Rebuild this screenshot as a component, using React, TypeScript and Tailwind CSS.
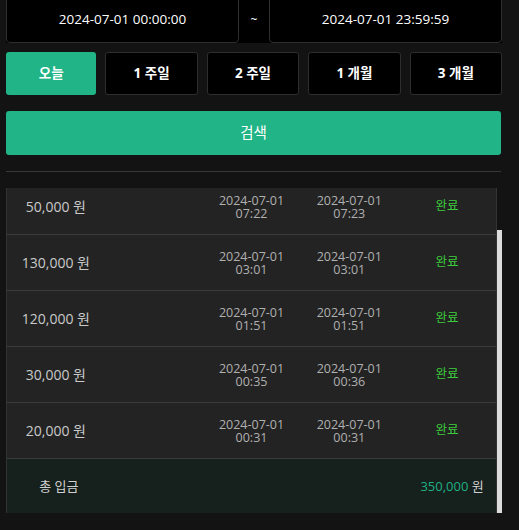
import React from "react";

const rows = [
  { amount: "50,000 원", d1: ["2024-07-01", "07:22"], d2: ["2024-07-01", "07:23"] },
  { amount: "130,000 원", d1: ["2024-07-01", "03:01"], d2: ["2024-07-01", "03:01"] },
  { amount: "120,000 원", d1: ["2024-07-01", "01:51"], d2: ["2024-07-01", "01:51"] },
  { amount: "30,000 원", d1: ["2024-07-01", "00:35"], d2: ["2024-07-01", "00:36"] },
  { amount: "20,000 원", d1: ["2024-07-01", "00:31"], d2: ["2024-07-01", "00:31"] },
];

const font = { fontFamily: '"Open Sans", "Noto Sans CJK KR", sans-serif' };

export default function App() {
  return (
    <div className="h-[530px] w-[519px] overflow-hidden bg-[#131313] px-[6px]" style={font}>
      {/* date range */}
      <div className="-mt-[4px] flex h-[47px] w-[496px] bg-black">
        <div className="flex flex-1 items-center justify-center rounded-[4px] border border-[#2e2e2e] bg-black text-[13.5px] text-white">
          2024-07-01 00:00:00
        </div>
        <div className="flex w-[30px] items-center justify-center text-[12px] text-white">~</div>
        <div className="flex flex-1 items-center justify-center rounded-[4px] border border-[#2e2e2e] bg-black text-[13.5px] text-white">
          2024-07-01 23:59:59
        </div>
      </div>

      {/* period buttons */}
      <div className="mt-[9px] flex w-[496px] gap-[9px]">
        <div className="flex h-[43px] flex-1 items-center justify-center rounded-[3px] bg-[#20b486] text-[13.5px] font-bold text-white">
          오늘
        </div>
        {["1 주일", "2 주일", "1 개월", "3 개월"].map((t) => (
          <div
            key={t}
            className="flex h-[43px] flex-1 items-center justify-center rounded-[3px] border border-[#2e2e2e] bg-black text-[13.5px] font-bold text-white"
          >
            {t}
          </div>
        ))}
      </div>

      {/* search */}
      <div className="mt-[16px] flex h-[44px] w-[495px] items-center justify-center rounded-[3px] bg-[#20b486] text-[14.5px] text-white">
        검색
      </div>

      <div className="mt-[16px] h-px w-[495px] bg-[#383838]" />

      {/* table */}
      <div className="mt-[16px] flex h-[325px] w-[496px] overflow-hidden">
        <div className="w-[491px] overflow-hidden border-x border-[#333]">
          <div className="-mt-[9px]">
            {rows.map((r, i) => (
              <div
                key={i}
                className="grid h-[56px] grid-cols-5 items-center border-b border-[#3a3a3a] bg-[#232323]"
              >
                <div className="text-center text-[14px] text-[#c9c9c9]">{r.amount}</div>
                <div />
                <div className="text-center text-[12.5px] leading-[13px] text-[#b0b0b0]">
                  <div>{r.d1[0]}</div>
                  <div>{r.d1[1]}</div>
                </div>
                <div className="text-center text-[12.5px] leading-[13px] text-[#b0b0b0]">
                  <div>{r.d2[0]}</div>
                  <div>{r.d2[1]}</div>
                </div>
                <div className="text-center text-[12.5px] text-[#3ccd3c]">완료</div>
              </div>
            ))}
            <div className="grid h-[56px] grid-cols-5 items-center bg-[#16201d]">
              <div className="pl-[6px] text-center text-[13px] text-[#cfcfcf]">총 입금</div>
              <div />
              <div />
              <div />
              <div className="pl-[10px] text-center text-[13px]">
                <span className="text-[#1fb084]">350,000</span>
                <span className="text-[#cfcfcf]"> 원</span>
              </div>
            </div>
          </div>
        </div>
        <div className="flex w-[5px] flex-col">
          <div className="h-[42px]" />
          <div className="flex-1 bg-[#dcdcdc]" />
        </div>
      </div>
    </div>
  );
}
